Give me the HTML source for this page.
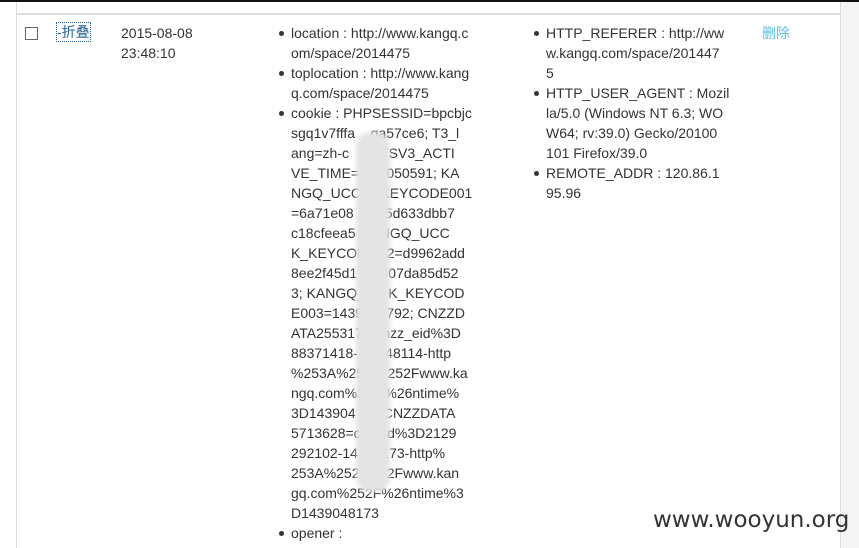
<!DOCTYPE html>
<html><head><meta charset="utf-8"><style>
body{margin:0;width:859px;height:548px;overflow:hidden;background:#fff;position:relative;font-family:"Liberation Sans","Noto Sans CJK SC",sans-serif;font-size:14px;color:#333}
.a{position:absolute;white-space:pre;line-height:20px}
.b{position:absolute;width:5px;height:5px;border-radius:50%;background:#333}
</style></head><body>
<div style="position:absolute;left:0;top:0;width:859px;height:2px;background:#111"></div>
<div style="position:absolute;left:16px;top:2px;width:1px;height:546px;background:#ddd"></div>
<div style="position:absolute;left:840px;top:2px;width:19px;height:546px;background:#f5f5f5;border-left:1px solid #ddd"></div>
<div style="position:absolute;left:17px;top:13px;width:823px;height:2px;background:#ddd"></div>
<div style="position:absolute;left:25px;top:27px;width:11px;height:11px;border:1px solid #666;background:#fff"></div>
<div class="a" style="left:57px;top:23px;color:#2a6496;outline:1px dotted #2a6496;line-height:18px">-折叠</div>
<div class="a" style="left:121px;top:23px">2015-08-08
23:48:10</div>
<div class="a" style="left:291px;top:23px">location : http://www.kangq.c
om/space/2014475
toplocation : http://www.kang
q.com/space/2014475
cookie : PHPSESSID=bpcbjc
sgq1v7fffa    ga57ce6; T3_l
ang=zh-c      _TSV3_ACTI
VE_TIME=     9050591; KA
NGQ_UCC     KEYCODE001
=6a71e08      65d633dbb7
c18cfeea5    ANGQ_UCC
K_KEYCOD     2=d9962add
8ee2f45d1      407da85d52
3; KANGQ_      K_KEYCOD
E003=1439      792; CNZZD
ATA255317     nzz_eid%3D
88371418-     048114-http
%253A%25      252Fwww.ka
ngq.com%2     %26ntime%
3D143904     ; CNZZDATA
5713628=c    eid%3D2129
292102-14    8173-http%
253A%252     52Fwww.kan
gq.com%252F%26ntime%3
D1439048173
opener :</div>
<div class="b" style="left:279px;top:31px"></div>
<div class="b" style="left:279px;top:71px"></div>
<div class="b" style="left:279px;top:111px"></div>
<div class="b" style="left:279px;top:531px"></div>
<div style="position:absolute;left:356px;top:132px;width:34px;height:360px;background:#e4e4e4;border-radius:14px;filter:blur(2px)"></div>
<div class="a" style="left:546px;top:23px">HTTP_REFERER : http://ww
w.kangq.com/space/201447
5
HTTP_USER_AGENT : Mozil
la/5.0 (Windows NT 6.3; WO
W64; rv:39.0) Gecko/20100
101 Firefox/39.0
REMOTE_ADDR : 120.86.1
95.96</div>
<div class="b" style="left:534px;top:31px"></div>
<div class="b" style="left:534px;top:91px"></div>
<div class="b" style="left:534px;top:171px"></div>
<div class="a" style="left:762px;top:23px;color:#5bc0de">删除</div>
<div class="a" style="left:653px;top:507px;font-size:23px;line-height:26px;font-family:'DejaVu Sans',sans-serif;color:#333">www.wooyun.org</div>
</body></html>
